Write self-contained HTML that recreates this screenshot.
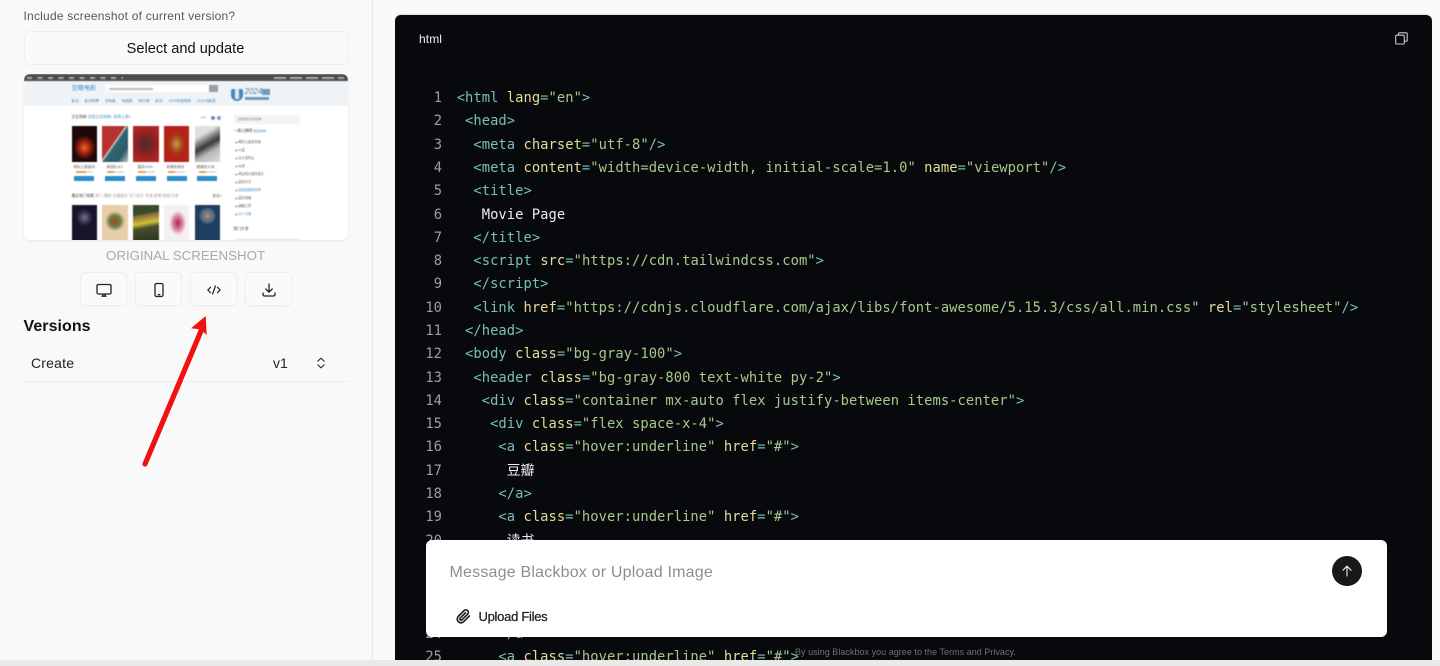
<!DOCTYPE html>
<html lang="en"><head><meta charset="utf-8"><title>Code view</title>
<style>
*{box-sizing:border-box}
html,body{margin:0;padding:0}
body{width:1440px;height:666px;overflow:hidden;background:#fafafa;position:relative;font-family:"Liberation Sans","Noto Sans CJK SC",sans-serif;color:#111}
.a{position:absolute;white-space:nowrap}
#side{left:0;top:0;width:373px;height:660px;background:#f9f9fa;border-right:1px solid #e9e9ea}
.btn{position:absolute;top:272px;height:34px;width:47px;border:1px solid #eeeeef;border-radius:5px;background:#fafafa;box-shadow:0 1px 1px rgba(0,0,0,.02)}
.btn svg{position:absolute;left:14px;top:8px}
#thumb{left:23.5px;top:74px;width:324px;height:166px;border-radius:6px;overflow:hidden;background:#fff;box-shadow:0 1px 2px rgba(0,0,0,.08)}
#thumb div{position:absolute}
#thumb .in{left:0;top:0;width:324px;height:166px;filter:blur(.45px)}
.t{font-size:3.6px;line-height:5px;color:#666;white-space:nowrap}
.b{font-size:3.6px;line-height:5px;color:#3f8fc9;white-space:nowrap}
.st{height:2px;width:17px;background:linear-gradient(90deg,#eda03c 60%,#ddd 60%)}
.bu{height:5px;width:20px;background:#2a8ccc}
.li{width:3px;height:1px;left:211px;background:#888}
#panel{left:395px;top:15px;width:1037px;height:645px;background:#08090c;border-radius:6px 6px 0 0;overflow:hidden;box-shadow:0 -1px 1px rgba(0,0,0,.12)}
#code{position:absolute;left:61.7px;top:72.2px;font-family:"DejaVu Sans Mono","Noto Sans CJK SC",monospace;font-size:13.8px;line-height:23.28px;white-space:pre;color:#eceff0;letter-spacing:.04px}
#nums{position:absolute;left:20px;top:72.2px;width:27px;text-align:right;font-family:"DejaVu Sans Mono",monospace;font-size:13.8px;line-height:23.28px;white-space:pre;color:#9b9fa2}
i{font-style:normal;color:#76c2ae}
u{text-decoration:none;color:#e3dc9b}
s{text-decoration:none;color:#a6c98a}
b{font-weight:normal;color:#76c2ae}
#chat{left:425.5px;top:539.5px;width:961px;height:97px;background:#fff;border-radius:6px}
</style></head><body>

<div class="a" id="side"></div>
<div class="a" style="left:23.5px;top:9px;font-size:12px;line-height:14px;color:#55585c;letter-spacing:.22px">Include screenshot of current version?</div>
<div class="a" style="left:23.5px;top:31px;width:324px;height:34px;border:1px solid #eeeeef;border-radius:6px;background:#fafafa;text-align:center;font-size:14.6px;line-height:34px;color:#111">Select and update</div>

<div class="a" id="thumb"><div class="in">
<div style="left:0;top:0;width:324px;height:7px;background:#4d4d4d"></div>
<div style="left:3px;top:2.5px;width:96px;height:2px;background:repeating-linear-gradient(90deg,#aaa 0 5px,#4d4d4d 5px 10.5px)"></div>
<div style="left:250px;top:2.5px;width:70px;height:2px;background:repeating-linear-gradient(90deg,#aaa 0 12px,#4d4d4d 12px 16px)"></div>
<div style="left:0;top:7px;width:324px;height:25px;background:#eff3f6"></div>
<div style="left:48px;top:10px;font-size:6.2px;line-height:9px;color:#3f8fc9;white-space:nowrap">豆瓣电影</div>
<div style="left:82px;top:11px;width:112px;height:7px;background:#fff"></div>
<div style="left:85px;top:13.5px;width:44px;height:2px;background:#bbb"></div>
<div style="left:185px;top:11px;width:9px;height:7px;background:#9a9ea2"></div>
<div class="b" style="left:48px;top:25px;word-spacing:5px">影讯 影讯购票 选电影 电视剧 排行榜 影评 2024年度榜单 2024书影音</div>
<div style="left:207px;top:15px;width:12px;height:12px;background:#4d86b8;border-radius:2px 2px 6px 6px"></div>
<div style="left:211px;top:15px;width:4px;height:10px;background:#dfe8ef"></div>
<div style="left:221px;top:13px;font-size:8px;line-height:9px;color:#4d86b8;font-style:italic;white-space:nowrap">2024</div>
<div style="left:221px;top:23px;width:24px;height:3px;background:#6b9ac2"></div>
<div style="left:238px;top:15px;width:8px;height:6px;background:#6b9ac2"></div>

<div class="t" style="left:48px;top:41px;font-size:3.8px;color:#444">正在热映 <span style="color:#3f8fc9">全部正在热映» 即将上映»</span></div>
<div style="left:177px;top:43px;width:5px;height:1px;background:#aaa"></div>
<div style="left:187px;top:41.5px;width:4px;height:4px;border-radius:50%;background:#6d87c4"></div>
<div style="left:193px;top:41.5px;width:4px;height:4px;border-radius:50%;background:#7f9cc9"></div>

<div style="left:48px;top:52px;width:25.5px;height:36px;background:radial-gradient(ellipse 11px 12px at 50% 60%,#e9651f,#8c1a0c 60%,#1d0a08 100%)"></div>
<div style="left:78.5px;top:52px;width:25.5px;height:36px;background:linear-gradient(125deg,#b5332f 0 45%,#e3d5cc 47%,#2f6774 52%,#2f5a68 78%,#c8c8c8 100%)"></div>
<div style="left:109.5px;top:52px;width:25.5px;height:36px;background:radial-gradient(circle at 50% 50%,#4a2a2a,#9c2020 55%,#b52a2a 100%)"></div>
<div style="left:140px;top:52px;width:25.5px;height:36px;background:radial-gradient(ellipse 10px 13px at 50% 50%,#c49a4a,#a63a1c 65%,#b52318 100%)"></div>
<div style="left:171px;top:52px;width:25.5px;height:36px;background:linear-gradient(150deg,#e0e0e0 0 25%,#707070 42%,#3a3a3a 52%,#b8b8b8 70%,#dcdcdc 100%)"></div>

<div class="t" style="left:50px;top:90.5px">哪吒之魔童闹</div>
<div class="t" style="left:83px;top:90.5px">美国队长4</div>
<div class="t" style="left:114px;top:90.5px">唐探1900</div>
<div class="t" style="left:143px;top:90.5px">射雕英雄传</div>
<div class="t" style="left:173px;top:90.5px">猪猪侠大电</div>
<div class="st" style="left:52px;top:97px"></div><div class="st" style="left:83px;top:97px;background:linear-gradient(90deg,#eda03c 40%,#ddd 40%)"></div><div class="st" style="left:114px;top:97px;background:linear-gradient(90deg,#eda03c 45%,#ddd 45%)"></div><div class="st" style="left:144px;top:97px;background:linear-gradient(90deg,#eda03c 40%,#ddd 40%)"></div><div class="st" style="left:175px;top:97px;background:linear-gradient(90deg,#eda03c 40%,#ddd 40%)"></div>
<div class="bu" style="left:50.5px;top:102px"></div><div class="bu" style="left:81.5px;top:102px"></div><div class="bu" style="left:112px;top:102px"></div><div class="bu" style="left:143px;top:102px"></div><div class="bu" style="left:173.5px;top:102px"></div>

<div class="t" style="left:48px;top:120px;font-size:3.8px;color:#444">最近热门电影 <span style="color:#999">热门 最新 豆瓣高分 冷门佳片 华语 欧美 韩国 日本</span></div>
<div class="t" style="left:189px;top:120px">更多»</div>

<div style="left:48px;top:131px;width:25.5px;height:36px;background:radial-gradient(ellipse 9px 9px at 50% 35%,#77708a,#2a2740 70%,#15142a 100%)"></div>
<div style="left:78.5px;top:131px;width:25.5px;height:36px;background:radial-gradient(ellipse 10px 10px at 50% 45%,#9c4a34,#6a7a3c 55%,#e8cdaa 100%)"></div>
<div style="left:109.5px;top:131px;width:25.5px;height:36px;background:linear-gradient(170deg,#3a4a2c 0 25%,#8a6a3a 30%,#d2c03a 50%,#46502c 62%,#2a321e 100%)"></div>
<div style="left:140px;top:131px;width:25.5px;height:36px;background:radial-gradient(ellipse 9px 13px at 55% 50%,#b0204a,#d98aa8 55%,#f4f0f0 95%)"></div>
<div style="left:171px;top:131px;width:25.5px;height:36px;background:radial-gradient(ellipse 9px 9px at 50% 30%,#b5876e,#4a6a88 70%,#1e3e60 100%)"></div>

<div style="left:210px;top:41px;width:66px;height:9px;background:#f3f4f3"></div>
<div class="t" style="left:214px;top:43px;font-size:3px;color:#888">全部电影在线观看</div>
<div class="t" style="left:210px;top:54.5px;font-size:3.8px;color:#444">一周口碑榜 <span style="color:#3f8fc9;font-size:3px">更多榜单»</span></div>
<div class="li" style="top:68px"></div><div class="t" style="left:215px;top:65.5px;font-size:3.2px">哪吒之魔童闹海</div>
<div class="li" style="top:76px"></div><div class="t" style="left:215px;top:73.5px;font-size:3.2px">火星</div>
<div class="li" style="top:84px"></div><div class="t" style="left:215px;top:81.5px;font-size:3.2px">办公室风云</div>
<div class="li" style="top:92px"></div><div class="t" style="left:215px;top:89.5px;font-size:3.2px">女孩</div>
<div class="li" style="top:100px"></div><div class="t" style="left:215px;top:97.5px;font-size:3.2px">再见吧大阪的夏天</div>
<div class="li" style="top:108px"></div><div class="t" style="left:215px;top:105.5px;font-size:3.2px">如何分手</div>
<div class="li" style="top:116px"></div><div class="t" style="left:215px;top:113.5px;font-size:3.2px;color:#3f8fc9">这就是我的世界</div>
<div class="li" style="top:124px"></div><div class="t" style="left:215px;top:121.5px;font-size:3.2px">星际穿越</div>
<div class="li" style="top:132px"></div><div class="t" style="left:215px;top:129.5px;font-size:3.2px">蝴蝶之梦</div>
<div class="li" style="top:140px"></div><div class="t" style="left:215px;top:137.5px;font-size:3.2px;color:#3f8fc9">大人与我</div>
<div class="t" style="left:210px;top:153px;font-size:3.8px;color:#444">热门片单</div>
<div style="left:210px;top:165px;width:66px;height:1px;background:#ddd"></div>
</div></div>

<div class="a" style="left:106px;top:248px;font-size:13.3px;line-height:16px;color:#a7a9ad">ORIGINAL SCREENSHOT</div>

<div class="btn" style="left:80px"><svg width="18" height="18" viewBox="0 0 18 18" fill="none" stroke="#222" stroke-width="1.3" stroke-linecap="round" stroke-linejoin="round"><rect x="2" y="3.5" width="14" height="9.5" rx="1.4"/><path d="M7 15.2h4M8 13.2v2M10 13.2v2"/></svg></div>
<div class="btn" style="left:135px"><svg width="18" height="18" viewBox="0 0 18 18" fill="none" stroke="#222" stroke-width="1.3" stroke-linecap="round" stroke-linejoin="round"><rect x="5" y="2.5" width="8" height="13" rx="1.5"/><path d="M8.2 13.7h1.6"/></svg></div>
<div class="btn" style="left:190px"><svg width="18" height="18" viewBox="0 0 18 18" fill="none" stroke="#222" stroke-width="1.2" stroke-linecap="round" stroke-linejoin="round"><path d="M5.5 6.3L2.8 9l2.7 2.7M12.5 6.3L15.2 9l-2.7 2.7M10.4 5L7.6 13"/></svg></div>
<div class="btn" style="left:244.5px"><svg width="18" height="18" viewBox="0 0 18 18" fill="none" stroke="#222" stroke-width="1.3" stroke-linecap="round" stroke-linejoin="round"><path d="M9 3v8M5.8 8L9 11.2 12.2 8M3 12v1.5a1.5 1.5 0 0 0 1.5 1.5h9a1.5 1.5 0 0 0 1.5-1.5V12"/></svg></div>

<div class="a" style="left:23.5px;top:317px;font-size:16px;line-height:19px;font-weight:bold;color:#111;letter-spacing:.05px">Versions</div>
<div class="a" style="left:31px;top:355px;font-size:14px;line-height:16px;color:#222;letter-spacing:.2px">Create</div>
<div class="a" style="left:273px;top:355px;font-size:14px;line-height:16px;color:#222">v1</div>
<svg class="a" style="left:315px;top:357px" width="12" height="12" viewBox="0 0 12 12" fill="none" stroke="#333" stroke-width="1.1" stroke-linecap="round" stroke-linejoin="round"><path d="M2.8 4.2L6 1.2l3.2 3M2.8 7.8L6 10.8l3.2-3"/></svg>
<div class="a" style="left:23px;top:381px;width:325px;height:1px;background:#ececed"></div>

<svg class="a" style="left:0;top:0" width="372" height="500" viewBox="0 0 372 500" fill="none"><path d="M145 464L201 331" stroke="#f01111" stroke-width="5.2" stroke-linecap="round"/><path d="M205.7 316L191 328.3 201 329.5 206.7 335Z" fill="#f01111"/></svg>

<div class="a" id="panel">
<div class="a" style="left:24px;top:17px;font-size:12px;line-height:14px;color:#f0f0f0;letter-spacing:.1px">html</div>
<svg class="a" style="left:999px;top:16px" width="15" height="15" viewBox="0 0 15 15" fill="none" stroke="#c9c9c9" stroke-width="1.1" stroke-linejoin="round"><rect x="1.7" y="4.2" width="8.6" height="8.8" rx="1"/><path d="M4.5 4V2.8a1 1 0 0 1 1-1h6.7a1 1 0 0 1 1 1v6.4a1 1 0 0 1-1 1H10.4"/></svg>
<div id="nums">1
2
3
4
5
6
7
8
9
10
11
12
13
14
15
16
17
18
19
20
21
22
23
24
25</div>
<div id="code"><i>&lt;html</i> <u>lang</u><b>=</b><s>&quot;en&quot;</s><i>&gt;</i>
 <i>&lt;head&gt;</i>
  <i>&lt;meta</i> <u>charset</u><b>=</b><s>&quot;utf-8&quot;</s><i>/&gt;</i>
  <i>&lt;meta</i> <u>content</u><b>=</b><s>&quot;width=device-width, initial-scale=1.0&quot;</s> <u>name</u><b>=</b><s>&quot;viewport&quot;</s><i>/&gt;</i>
  <i>&lt;title&gt;</i>
   Movie Page
  <i>&lt;/title&gt;</i>
  <i>&lt;script</i> <u>src</u><b>=</b><s>&quot;https://cdn.tailwindcss.com&quot;</s><i>&gt;</i>
  <i>&lt;/script&gt;</i>
  <i>&lt;link</i> <u>href</u><b>=</b><s>&quot;https://cdnjs.cloudflare.com/ajax/libs/font-awesome/5.15.3/css/all.min.css&quot;</s> <u>rel</u><b>=</b><s>&quot;stylesheet&quot;</s><i>/&gt;</i>
 <i>&lt;/head&gt;</i>
 <i>&lt;body</i> <u>class</u><b>=</b><s>&quot;bg-gray-100&quot;</s><i>&gt;</i>
  <i>&lt;header</i> <u>class</u><b>=</b><s>&quot;bg-gray-800 text-white py-2&quot;</s><i>&gt;</i>
   <i>&lt;div</i> <u>class</u><b>=</b><s>&quot;container mx-auto flex justify-between items-center&quot;</s><i>&gt;</i>
    <i>&lt;div</i> <u>class</u><b>=</b><s>&quot;flex space-x-4&quot;</s><i>&gt;</i>
     <i>&lt;a</i> <u>class</u><b>=</b><s>&quot;hover:underline&quot;</s> <u>href</u><b>=</b><s>&quot;#&quot;</s><i>&gt;</i>
      豆瓣
     <i>&lt;/a&gt;</i>
     <i>&lt;a</i> <u>class</u><b>=</b><s>&quot;hover:underline&quot;</s> <u>href</u><b>=</b><s>&quot;#&quot;</s><i>&gt;</i>
      读书
     <i>&lt;/a&gt;</i>
     <i>&lt;a</i> <u>class</u><b>=</b><s>&quot;hover:underline&quot;</s> <u>href</u><b>=</b><s>&quot;#&quot;</s><i>&gt;</i>
      电影
     <i>&lt;/a&gt;</i>
     <i>&lt;a</i> <u>class</u><b>=</b><s>&quot;hover:underline&quot;</s> <u>href</u><b>=</b><s>&quot;#&quot;</s><i>&gt;</i></div>
<div class="a" style="left:400px;top:631px;font-size:9px;line-height:12px;color:#6f7174;letter-spacing:.03px">By using Blackbox you agree to the Terms and Privacy.</div>
</div>

<div class="a" id="chat"></div>
<div class="a" style="left:449.5px;top:564px;font-size:16px;line-height:18px;color:#8e8e8e;letter-spacing:.2px">Message Blackbox or Upload Image</div>
<svg class="a" style="left:455.5px;top:609px" width="15" height="15" viewBox="0 0 24 24" fill="none" stroke="#1c1c1c" stroke-width="2.6" stroke-linecap="round" stroke-linejoin="round"><path d="M21.4 11.1l-9.2 9.2a6 6 0 0 1-8.5-8.5l9.2-9.2a4 4 0 0 1 5.7 5.7l-9.2 9.2a2 2 0 0 1-2.8-2.8l8.5-8.5"/></svg>
<div class="a" style="left:478.5px;top:609px;font-size:13px;line-height:16px;color:#222;-webkit-text-stroke:.25px #222;letter-spacing:-.28px">Upload Files</div>
<div class="a" style="left:1332px;top:556px;width:30px;height:30px;border-radius:50%;background:#18181a"></div>
<svg class="a" style="left:1339px;top:563px" width="16" height="16" viewBox="0 0 16 16" fill="none" stroke="#f2f2f2" stroke-width="1.1" stroke-linecap="round" stroke-linejoin="round"><path d="M8 13V3.2M4 7.2L8 3.2l4 4"/></svg>

<div class="a" style="left:0;top:660px;width:1440px;height:6px;background:#e9e9e9"></div>
<div class="a" style="left:1432px;top:0;width:8px;height:660px;background:#fafafa"></div>
</body></html>
